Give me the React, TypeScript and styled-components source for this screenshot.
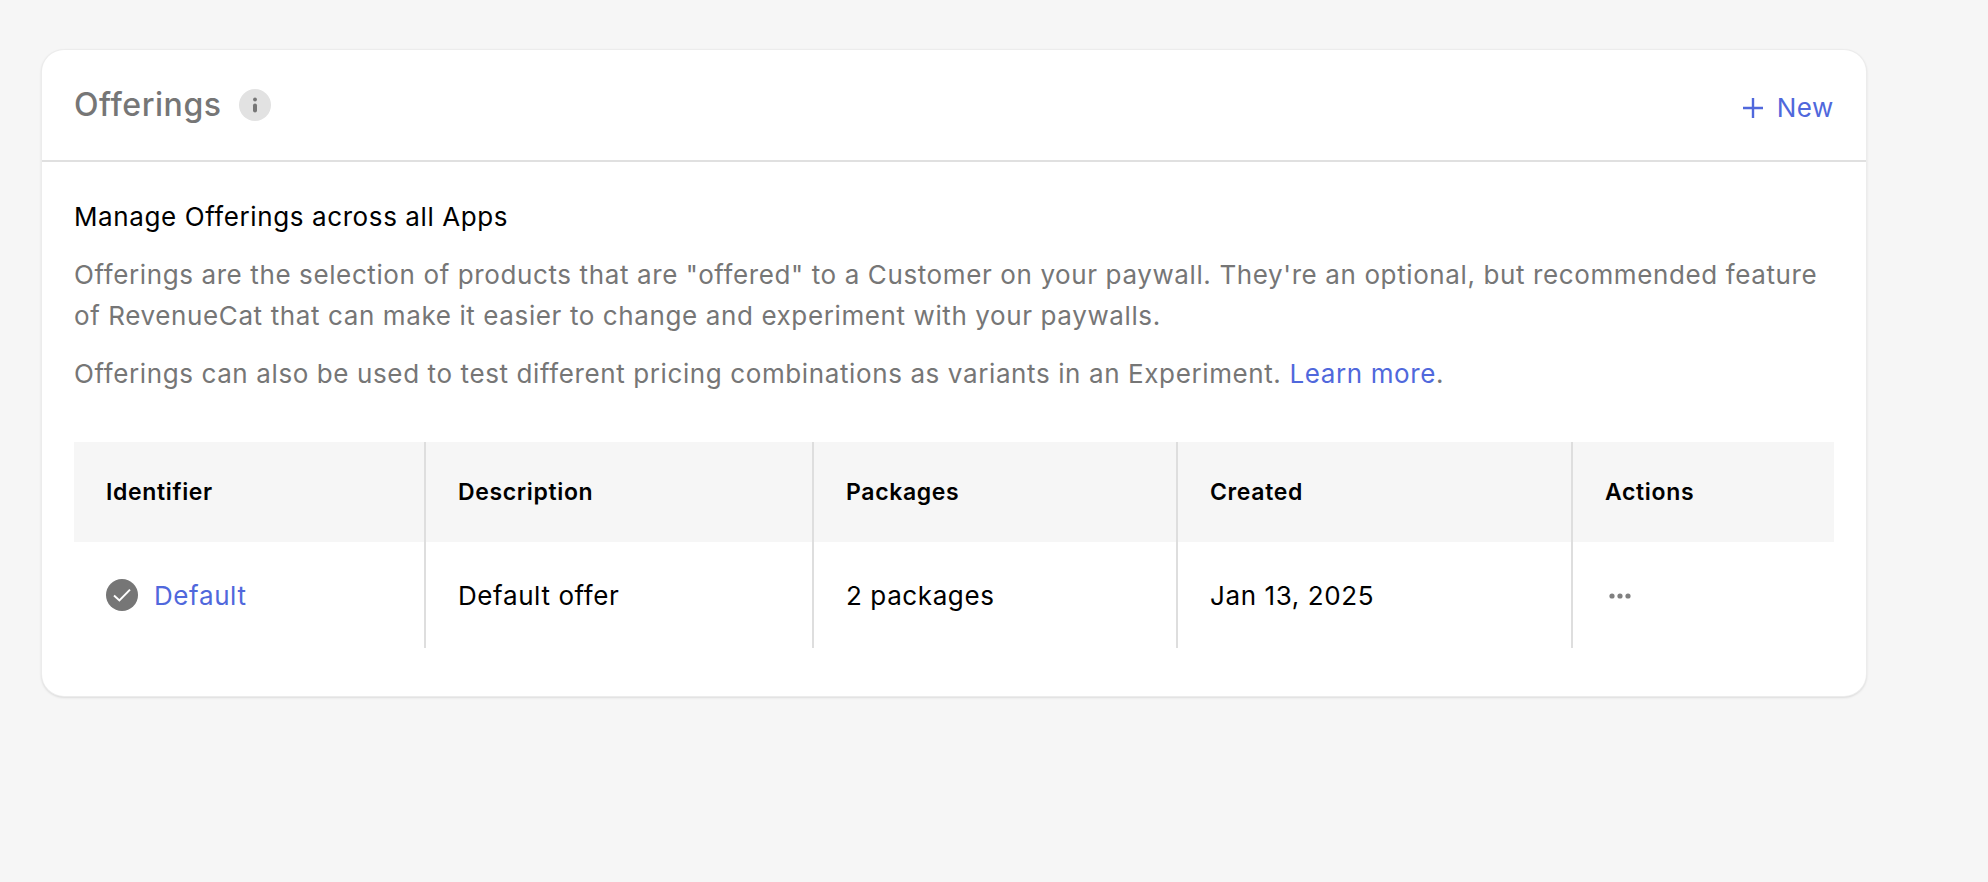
import React from "react";
import styled, { createGlobalStyle } from "styled-components";

const Global = createGlobalStyle`
  html, body { margin: 0; padding: 0; background: #f6f6f6; }
  body { font-family: Inter, "Liberation Sans", sans-serif; color: #000; letter-spacing: 0.6px; }
`;

const Page = styled.main`
  width: 1988px;
  height: 882px;
  box-sizing: border-box;
  padding: 50px 122px 0 42px;
  overflow: hidden;
`;

const Card = styled.section`
  box-sizing: border-box;
  height: 646px;
  background: #fff;
  border-radius: 22px;
  box-shadow: 0 0 0 1px #ececec, 0 1px 3px rgba(0, 0, 0, 0.22);
  overflow: hidden;
`;

const CardHeader = styled.header`
  box-sizing: border-box;
  height: 112px;
  padding: 0 32px;
  display: flex;
  align-items: center;
  justify-content: space-between;
  border-bottom: 2px solid #e0e0e0;
`;

const TitleGroup = styled.div`
  display: flex;
  align-items: center;
  gap: 17px;
`;

const Title = styled.h1`
  margin: 0;
  font-family: Inter, sans-serif;
  font-size: 32px;
  line-height: 40px;
  font-weight: 500;
  letter-spacing: 0.55px;
  color: #767676;
`;

const InfoBadge = styled.span`
  width: 32px;
  height: 32px;
  border-radius: 50%;
  background: #e2e2e2;
  display: flex;
  align-items: center;
  justify-content: center;
`;

const NewButton = styled.button`
  border: 0;
  background: none;
  padding: 0;
  margin-top: 5px;
  display: flex;
  align-items: center;
  gap: 14px;
  font: 400 26px/32px Inter, sans-serif;
  letter-spacing: 0.6px;
  color: #5068dc;
`;

const Body = styled.div`
  padding: 39px 32px 0;
`;

const Heading = styled.h2`
  margin: 0 0 21px;
  font-size: 26px;
  line-height: 32px;
  font-weight: 400;
  color: #000;
`;

const Paragraph = styled.p`
  margin: 0 0 17px;
  font-size: 26px;
  line-height: 41px;
  letter-spacing: 0.61px;
  color: #767676;
`;

const Link = styled.a`
  color: #5068dc;
`;

const Table = styled.div`
  margin-top: 48px;
  display: grid;
  grid-template-columns: 350px 388px 364px 395px 1fr;
`;

const HeadCell = styled.div<{ $first?: boolean }>`
  box-sizing: border-box;
  height: 100px;
  padding: 0 32px;
  display: flex;
  align-items: center;
  background: #f6f6f6;
  font-size: 23px;
  font-weight: 600;
  letter-spacing: 0.65px;
  border-left: ${(p) => (p.$first ? "0" : "2px solid #dedede")};
`;

const Cell = styled.div<{ $first?: boolean }>`
  box-sizing: border-box;
  height: 106px;
  padding: 0 32px;
  display: flex;
  align-items: center;
  gap: 16px;
  font-size: 26px;
  border-left: ${(p) => (p.$first ? "0" : "2px solid #dedede")};
`;

const Status = styled.span`
  width: 32px;
  height: 32px;
  border-radius: 50%;
  background: #767676;
  display: flex;
  align-items: center;
  justify-content: center;
`;

const Dots = styled.svg`
  display: block;
  margin-left: 4px;
  margin-top: 1px;
`;

export default function App() {
  return (
    <>
      <Global />
      <Page>
        <Card>
          <CardHeader>
            <TitleGroup>
              <Title>Offerings</Title>
              <InfoBadge>
                <svg width="6" height="16" viewBox="0 0 6 16">
                  <circle cx="3" cy="2.5" r="1.9" fill="#767676" />
                  <rect x="1" y="6.5" width="4" height="9" rx="2" fill="#767676" />
                </svg>
              </InfoBadge>
            </TitleGroup>
            <NewButton>
              <svg width="20" height="20" viewBox="0 0 20 20">
                <path d="M10 0v20M0 10h20" stroke="#5068dc" strokeWidth="2.4" fill="none" />
              </svg>
              New
            </NewButton>
          </CardHeader>
          <Body>
            <Heading>Manage Offerings across all Apps</Heading>
            <Paragraph>
              Offerings are the selection of products that are "offered" to a Customer on your paywall. They're an optional, but recommended feature of RevenueCat that can make it easier to change and experiment with your paywalls.
            </Paragraph>
            <Paragraph>
              Offerings can also be used to test different pricing combinations as variants in an Experiment. <Link>Learn more</Link>.
            </Paragraph>
            <Table>
              <HeadCell $first>Identifier</HeadCell>
              <HeadCell>Description</HeadCell>
              <HeadCell>Packages</HeadCell>
              <HeadCell>Created</HeadCell>
              <HeadCell>Actions</HeadCell>
              <Cell $first>
                <Status>
                  <svg width="18" height="14" viewBox="0 0 18 14">
                    <path d="M1 7.5 6.4 12.4 17 1.6" stroke="#fff" strokeWidth="2" fill="none" />
                  </svg>
                </Status>
                <Link>Default</Link>
              </Cell>
              <Cell>Default offer</Cell>
              <Cell>2 packages</Cell>
              <Cell>Jan 13, 2025</Cell>
              <Cell>
                <Dots width="22" height="6" viewBox="0 0 22 6">
                  <circle cx="3" cy="3" r="2.6" fill="#808080" />
                  <circle cx="11" cy="3" r="2.6" fill="#808080" />
                  <circle cx="19" cy="3" r="2.6" fill="#808080" />
                </Dots>
              </Cell>
            </Table>
          </Body>
        </Card>
      </Page>
    </>
  );
}
